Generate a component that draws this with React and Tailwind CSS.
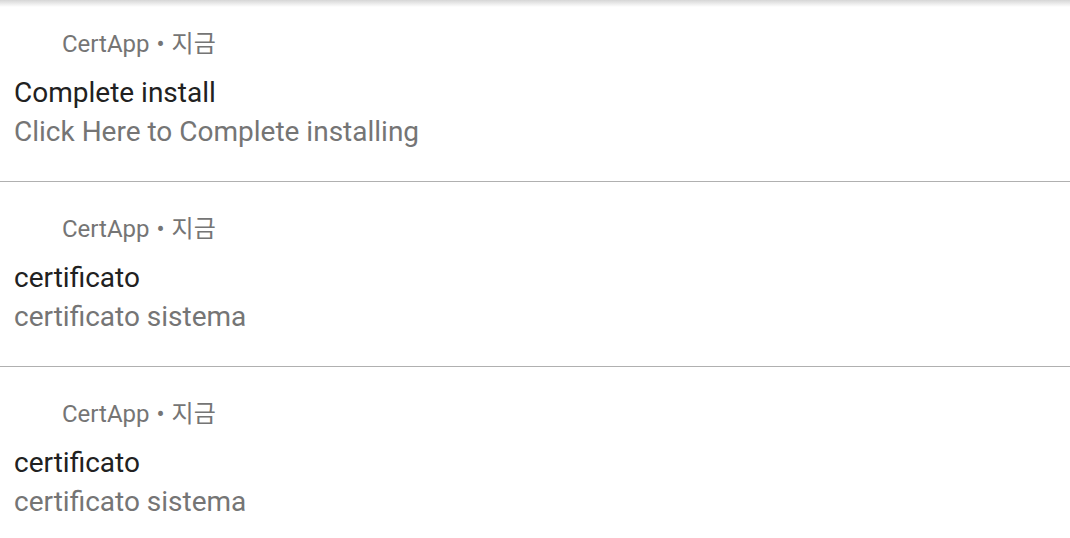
import React from "react";

const items = [
  { title: "Complete install", body: "Click Here to Complete installing", first: true },
  { title: "certificato", body: "certificato sistema" },
  { title: "certificato", body: "certificato sistema" },
];

function Notif({ title, body, first }) {
  return (
    <div className={`border-b border-[#b0b0b0] pb-[29px] ${first ? "pt-[28px]" : "pt-[31px]"}`}>
      <div className="h-[32px] pl-[62px] text-[24px] leading-[32px] text-[#757575]">
        CertApp <span className="mx-[1px]">•</span> 지금
      </div>
      <div className="mt-[14px] h-[38px] pl-[14px] text-[28px] leading-[38px] text-[#212121]">{title}</div>
      <div className="h-[40px] pl-[14px] text-[28px] leading-[40px] text-[#757575]">{body}</div>
    </div>
  );
}

export default function App() {
  return (
    <div
      className="relative h-[538px] w-[1070px] overflow-hidden bg-white"
      style={{ fontFamily: 'Roboto, "Noto Sans CJK KR", sans-serif' }}
    >
      <div className="pointer-events-none absolute inset-x-0 top-0 h-[7px] bg-gradient-to-b from-[#d6d6d6] to-white/0" />
      {items.map((it, i) => (
        <Notif key={i} {...it} />
      ))}
    </div>
  );
}
